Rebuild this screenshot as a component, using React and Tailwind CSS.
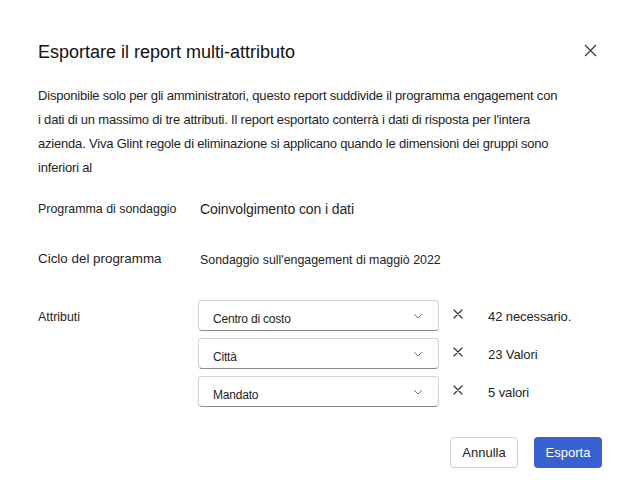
import React from "react";

const Chevron = () => (
  <svg width="12" height="12" viewBox="0 0 12 12" fill="none" className="text-gray-500">
    <path d="M2.5 4.5 L6 8 L9.5 4.5" stroke="currentColor" strokeWidth="1" strokeLinecap="round" strokeLinejoin="round" />
  </svg>
);

const SmallX = () => (
  <svg width="10" height="10" viewBox="0 0 10 10" fill="none">
    <path d="M1 1 L9 9 M9 1 L1 9" stroke="#333" strokeWidth="1.2" strokeLinecap="round" />
  </svg>
);

function Select({ label }) {
  return (
    <div className="w-[241px] h-[31px] flex items-center justify-between pl-[14px] pr-[14px] border border-[#d1d1d1] border-b-[#8a8a8a] rounded-[4px] bg-white">
      <span className="text-[12px] tracking-[-0.2px] text-[#242424] pt-[6px]">{label}</span>
      <Chevron />
    </div>
  );
}

export default function App() {
  const attrs = [
    { label: "Centro di costo", value: "42 necessario." },
    { label: "Città", value: "23 Valori" },
    { label: "Mandato", value: "5 valori" },
  ];
  return (
    <div className="w-[634px] h-[499px] bg-white text-[#242424] relative" style={{ fontFamily: '"Liberation Sans", Arial, sans-serif' }}>
      <div className="pl-[38px] pr-[32px] pt-[40px]">
        <div className="flex items-start justify-between">
          <h1 className="text-[18px] leading-[24px] font-normal text-[#111]">Esportare il report multi-attributo</h1>
          <button className="w-[20px] h-[20px] flex items-center justify-center mr-[2px]">
            <svg width="13" height="13" viewBox="0 0 13 13" fill="none">
              <path d="M1 1 L12 12 M12 1 L1 12" stroke="#333" strokeWidth="1.1" />
            </svg>
          </button>
        </div>
        <p className="mt-[20px] text-[13px] tracking-[-0.2px] leading-[24px] text-[#242424]">
          Disponibile solo per gli amministratori, questo report suddivide il programma engagement con
          <br />
          i dati di un massimo di tre attributi. Il report esportato conterrà i dati di risposta per l'intera
          <br />
          azienda. Viva Glint regole di eliminazione si applicano quando le dimensioni dei gruppi sono
          <br />
          inferiori al
        </p>
        <div className="mt-[17px] flex items-center h-[24px]">
          <span className="w-[162px] text-[12.4px]">Programma di sondaggio</span>
          <span className="text-[14px] tracking-[-0.1px]">Coinvolgimento con i dati</span>
        </div>
        <div className="mt-[26px] flex items-center h-[24px]">
          <span className="w-[162px] text-[13.4px]">Ciclo del programma</span>
          <span className="text-[12.4px] pt-[2px]">Sondaggio sull'engagement di maggiò 2022</span>
        </div>
        <div className="mt-[29px] flex">
          <span className="w-[160px] text-[12.4px] pt-[8px]">Attributi</span>
          <div className="flex flex-col gap-[7px]">
            {attrs.map((a) => (
              <div key={a.label} className="flex items-center">
                <Select label={a.label} />
                <span className="ml-[14px] w-[35px] flex justify-start -mt-[3px]"><SmallX /></span>
                <span className="text-[13px] tracking-[-0.1px] pt-[2px]">{a.value}</span>
              </div>
            ))}
          </div>
        </div>
        <div className="mt-[30px] flex justify-end gap-[16px] pr-0">
          <button className="w-[68px] h-[31px] border border-[#d1d1d1] rounded-[4px] bg-white text-[13px] text-[#242424]">Annulla</button>
          <button className="w-[68px] h-[31px] rounded-[4px] bg-[#3761d0] text-[13px] text-white">Esporta</button>
        </div>
      </div>
    </div>
  );
}
